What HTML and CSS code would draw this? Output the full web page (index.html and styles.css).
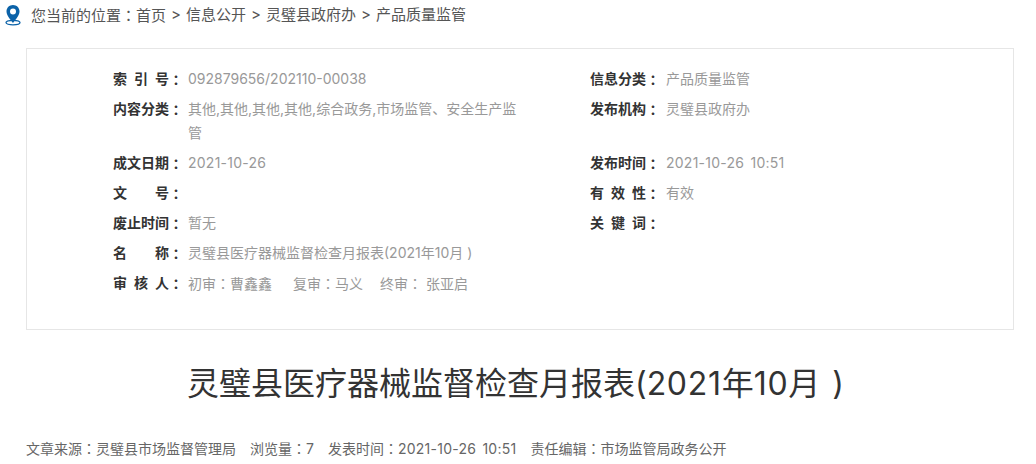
FILE: index.html
```html
<!DOCTYPE html>
<html>
<head>
<meta charset="utf-8">
<title>灵璧县医疗器械监督检查月报表</title>
<link rel="stylesheet" href="styles.css">
</head>
<body>
<nav class="crumb">
  <svg class="pin" width="16" height="22" viewBox="0 0 16 22" aria-hidden="true">
    <ellipse cx="8" cy="18.600" rx="7" ry="2.300" fill="none" stroke="#0b62a8" stroke-width="1.300"/>
    <path fill="#0b62a8" fill-rule="evenodd" d="M8 1C4.300 1 1.500 3.800 1.500 7.400c0 4.200 4 8 6.500 11.600 2.500-3.600 6.500-7.400 6.500-11.600C14.500 3.800 11.700 1 8 1zM8 4.400a3 3 0 1 1 0 6 3 3 0 0 1 0-6z"/>
  </svg>
  <span>您当前的位置<span class="c">：</span>首页</span><span class="sep">&gt;</span><span>信息公开</span><span class="sep">&gt;</span><span>灵璧县政府办</span><span class="sep">&gt;</span><span>产品质量监管</span>
</nav>
<section class="meta">
  <div class="col col-left">
    <div class="row"><span class="key"><span class="name">索引号</span><span class="c">：</span></span><span class="val">092879656/202110-00038</span></div>
    <div class="row"><span class="key"><span class="name">内容分类</span><span class="c">：</span></span><span class="val">其他,其他,其他,其他,综合政务,市场监管、安全生产监管</span></div>
    <div class="row"><span class="key"><span class="name">成文日期</span><span class="c">：</span></span><span class="val"><span class="num">2021-10-26</span></span></div>
    <div class="row"><span class="key"><span class="name">文 号</span><span class="c">：</span></span><span class="val"></span></div>
    <div class="row"><span class="key"><span class="name">废止时间</span><span class="c">：</span></span><span class="val">暂无</span></div>
    <div class="row"><span class="key"><span class="name">名 称</span><span class="c">：</span></span><span class="val">灵璧县医疗器械监督检查月报表(2021年10月 )</span></div>
    <div class="row"><span class="key"><span class="name">审核人</span><span class="c">：</span></span><span class="val reviewers"><span class="rev-first">初审<span class="c">：</span>曹鑫鑫</span><span class="rev-second">复审<span class="c">：</span>马义</span><span>终审<span class="c">：</span> 张亚启</span></span></div>
  </div>
  <div class="col col-right">
    <div class="row"><span class="key"><span class="name">信息分类</span><span class="c">：</span></span><span class="val">产品质量监管</span></div>
    <div class="row row-tall"><span class="key"><span class="name">发布机构</span><span class="c">：</span></span><span class="val">灵璧县政府办</span></div>
    <div class="row"><span class="key"><span class="name">发布时间</span><span class="c">：</span></span><span class="val"><span class="num">2021-10-26 10:51</span></span></div>
    <div class="row"><span class="key"><span class="name">有效性</span><span class="c">：</span></span><span class="val">有效</span></div>
    <div class="row"><span class="key"><span class="name">关键词</span><span class="c">：</span></span><span class="val"></span></div>
  </div>
</section>
<h1 class="title">灵璧县医疗器械监督检查月报表(<span class="title-num">2021</span>年<span class="title-num">10</span>月 )</h1>
<div class="info"><span>文章来源<span class="c">：</span>灵璧县市场监督管理局</span><span>浏览量<span class="c">：</span>7</span><span>发表时间<span class="c">：</span><span class="num">2021-10-26 10:51</span></span><span>责任编辑<span class="c">：</span>市场监管局政务公开</span></div>
</body>
</html>
```
FILE: styles.css
```css
* { box-sizing: border-box; }
html, body { margin: 0; padding: 0; }
body {
  width: 1036px;
  height: 464px;
  overflow: hidden;
  background: #fff;
  font-family: Inter, "Noto Sans CJK SC", sans-serif;
  font-size: 14px;
  color: #333;
}
.c { font-family: "Noto Sans CJK TC", sans-serif; }
.num { letter-spacing: 0.25px; word-spacing: 2px; }
.crumb {
  display: flex;
  align-items: center;
  height: 30px;
  padding-left: 5px;
  font-size: 15px;
  color: #555;
  line-height: 30px;
}
.pin { margin-right: 10px; }
.sep { width: 20px; text-align: center; }
.meta {
  display: flex;
  width: 988px;
  height: 282px;
  margin: 18px 0 0 26px;
  padding: 18px 0 0 86px;
  border: 1px solid #e6e6e6;
}
.col-left { width: 477px; }
.row { display: flex; margin-bottom: 6px; line-height: 24px; min-height: 24px; }
.row-tall { min-height: 54px; margin-bottom: 0; padding-bottom: 6px; }
.key { display: flex; flex: none; width: 75px; font-weight: 700; color: #333; }
.col-right .key { width: 76px; }
.name { display: block; width: 56px; text-align: justify; text-align-last: justify; }
.val { width: 330px; color: #999; }
.reviewers { display: flex; }
.rev-first { margin-right: 21px; }
.rev-second { margin-right: 17px; }
.title {
  margin: 29px 0 0;
  padding-right: 5px;
  text-align: center;
  font-size: 32px;
  font-weight: 400;
  line-height: 50px;
  word-spacing: 3px;
  color: #333;
}
.title-num { letter-spacing: 0.7px; }
.info {
  display: flex;
  gap: 14px;
  margin: 27px 0 0 26px;
  color: #666;
  line-height: 24px;
}
```
